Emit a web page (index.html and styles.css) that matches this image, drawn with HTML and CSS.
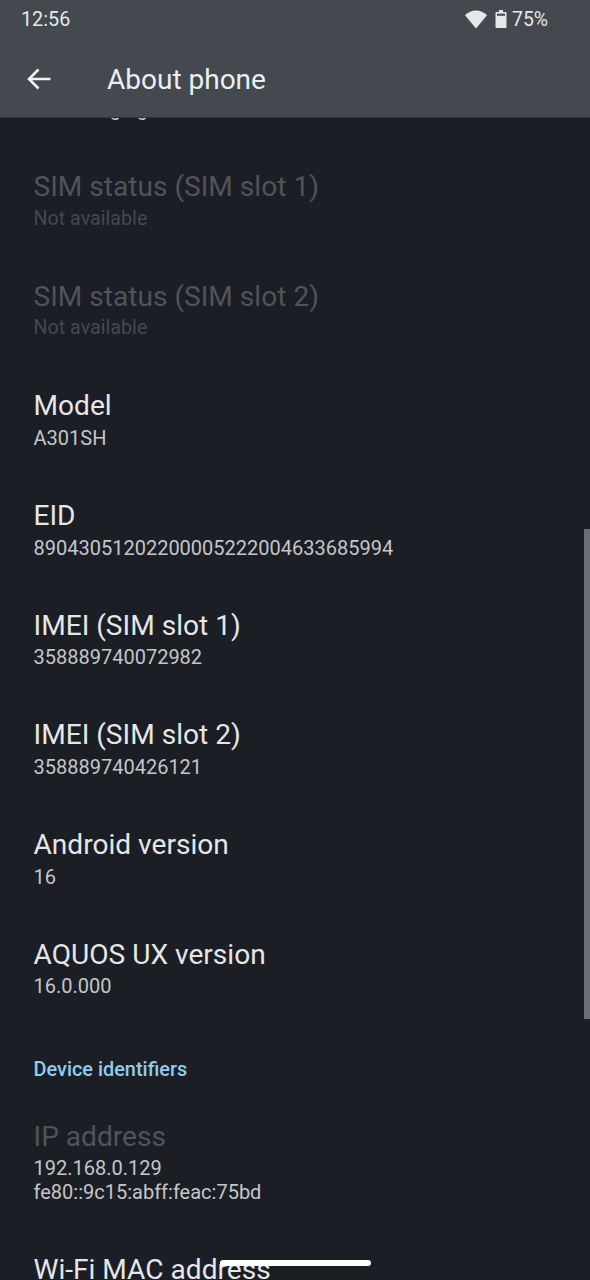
FILE: index.html
```html
<!DOCTYPE html>
<html lang="en">
<head>
<meta charset="utf-8">
<title>About phone</title>
<link rel="stylesheet" href="styles.css">
</head>
<body>
<div class="phone">
  <header class="appbar">
    <div class="status">
      <span class="clock">12:56</span>
      <div class="status-right">
        <svg class="wifi" width="24" height="20" viewBox="0 0 24 20"><path d="M1 6.2C4 3.2 7.8 1.5 12 1.5s8 1.7 11 4.7L12 19.5z" fill="#e6e7e8"/></svg>
        <svg class="battery" width="12" height="20" viewBox="0 0 12 20"><path d="M4 1h4v2h2.5a1 1 0 0 1 1 1v14a1 1 0 0 1-1 1h-9a1 1 0 0 1-1-1V4a1 1 0 0 1 1-1H4z" fill="#e6e7e8"/><rect x="2" y="4.6" width="8" height="2.2" fill="#4a5057"/></svg>
        <span class="percent">75%</span>
      </div>
    </div>
    <div class="toolbar">
      <svg class="back" width="26" height="24" viewBox="0 0 26 24"><path d="M24.5 12H3M12.5 2.5 3 12l9.500 9.500" fill="none" stroke="#f1f2f3" stroke-width="2.600"/></svg>
      <h1 class="title">About phone</h1>
    </div>
  </header>
  <main class="list">
    <div class="row"><div class="row-title">Regulatory labels</div><div class="row-sub">Not charging</div></div>
    <div class="row off"><div class="row-title">SIM status (SIM slot 1)</div><div class="row-sub">Not available</div></div>
    <div class="row off"><div class="row-title">SIM status (SIM slot 2)</div><div class="row-sub">Not available</div></div>
    <div class="row"><div class="row-title">Model</div><div class="row-sub">A301SH</div></div>
    <div class="row"><div class="row-title">EID</div><div class="row-sub">89043051202200005222004633685994</div></div>
    <div class="row"><div class="row-title">IMEI (SIM slot 1)</div><div class="row-sub">358889740072982</div></div>
    <div class="row"><div class="row-title">IMEI (SIM slot 2)</div><div class="row-sub">358889740426121</div></div>
    <div class="row"><div class="row-title">Android version</div><div class="row-sub">16</div></div>
    <div class="row"><div class="row-title">AQUOS UX version</div><div class="row-sub">16.0.000</div></div>
    <div class="section">Device identifiers</div>
    <div class="row off-title"><div class="row-title">IP address</div><div class="row-sub">192.168.0.129<br>fe80::9c15:abff:feac:75bd</div></div>
    <div class="row"><div class="row-title">Wi-Fi MAC address</div></div>
  </main>
  <div class="scrollbar"></div>
  <div class="home-pill"></div>
</div>
</body>
</html>
```
FILE: styles.css
```css
* { box-sizing: border-box; }
html, body { margin: 0; padding: 0; background: #1b1e24; }
.phone {
  position: relative;
  width: 590px;
  height: 1280px;
  overflow: hidden;
  background: #1b1e24;
  font-family: Roboto, "Noto Sans", sans-serif;
}
.appbar {
  position: relative;
  z-index: 2;
  height: 118px;
  background: #43494f;
  border-bottom: 1px solid #30353b;
}
.status {
  height: 38px;
  padding: 0 42px 0 21px;
  display: flex;
  align-items: center;
  justify-content: space-between;
  color: #e6e7e8;
  font-size: 19.800px;
}
.status-right { display: flex; align-items: center; gap: 7px; }
.percent { margin-left: -2px; font-size: 19.400px; }
.toolbar {
  height: 82px;
  padding: 0 0 0 26px;
  display: flex;
  align-items: center;
  gap: 55px;
}
.back { flex: none; }
.title {
  margin: 0;
  font-size: 28px;
  font-weight: 400;
  color: #eceef0;
}
.list { margin-top: -83.500px; }
.row { padding: 22.850px 33.500px 23.350px; }
.row-title {
  font-size: 28.100px;
  line-height: 39.500px;
  color: #e4e6e8;
  white-space: nowrap;
}
.row-sub {
  font-size: 20px;
  line-height: 24px;
  color: #c4c6c9;
  white-space: nowrap;
}
.off .row-title { color: #505357; }
.off .row-sub { color: #45484c; font-size: 19.700px; }
.off-title .row-title { color: #505357; }
.section {
  padding: 36px 33.500px 12px;
  font-size: 19.900px;
  line-height: 24px;
  font-weight: 500;
  color: #8fcdf0;
}
.scrollbar {
  position: absolute;
  top: 529px;
  right: 0;
  width: 6px;
  height: 490px;
  background: #6a6e72;
}
.home-pill {
  position: absolute;
  top: 1260px;
  left: 220px;
  width: 151px;
  height: 6px;
  border-radius: 3px;
  background: #ffffff;
}
```
